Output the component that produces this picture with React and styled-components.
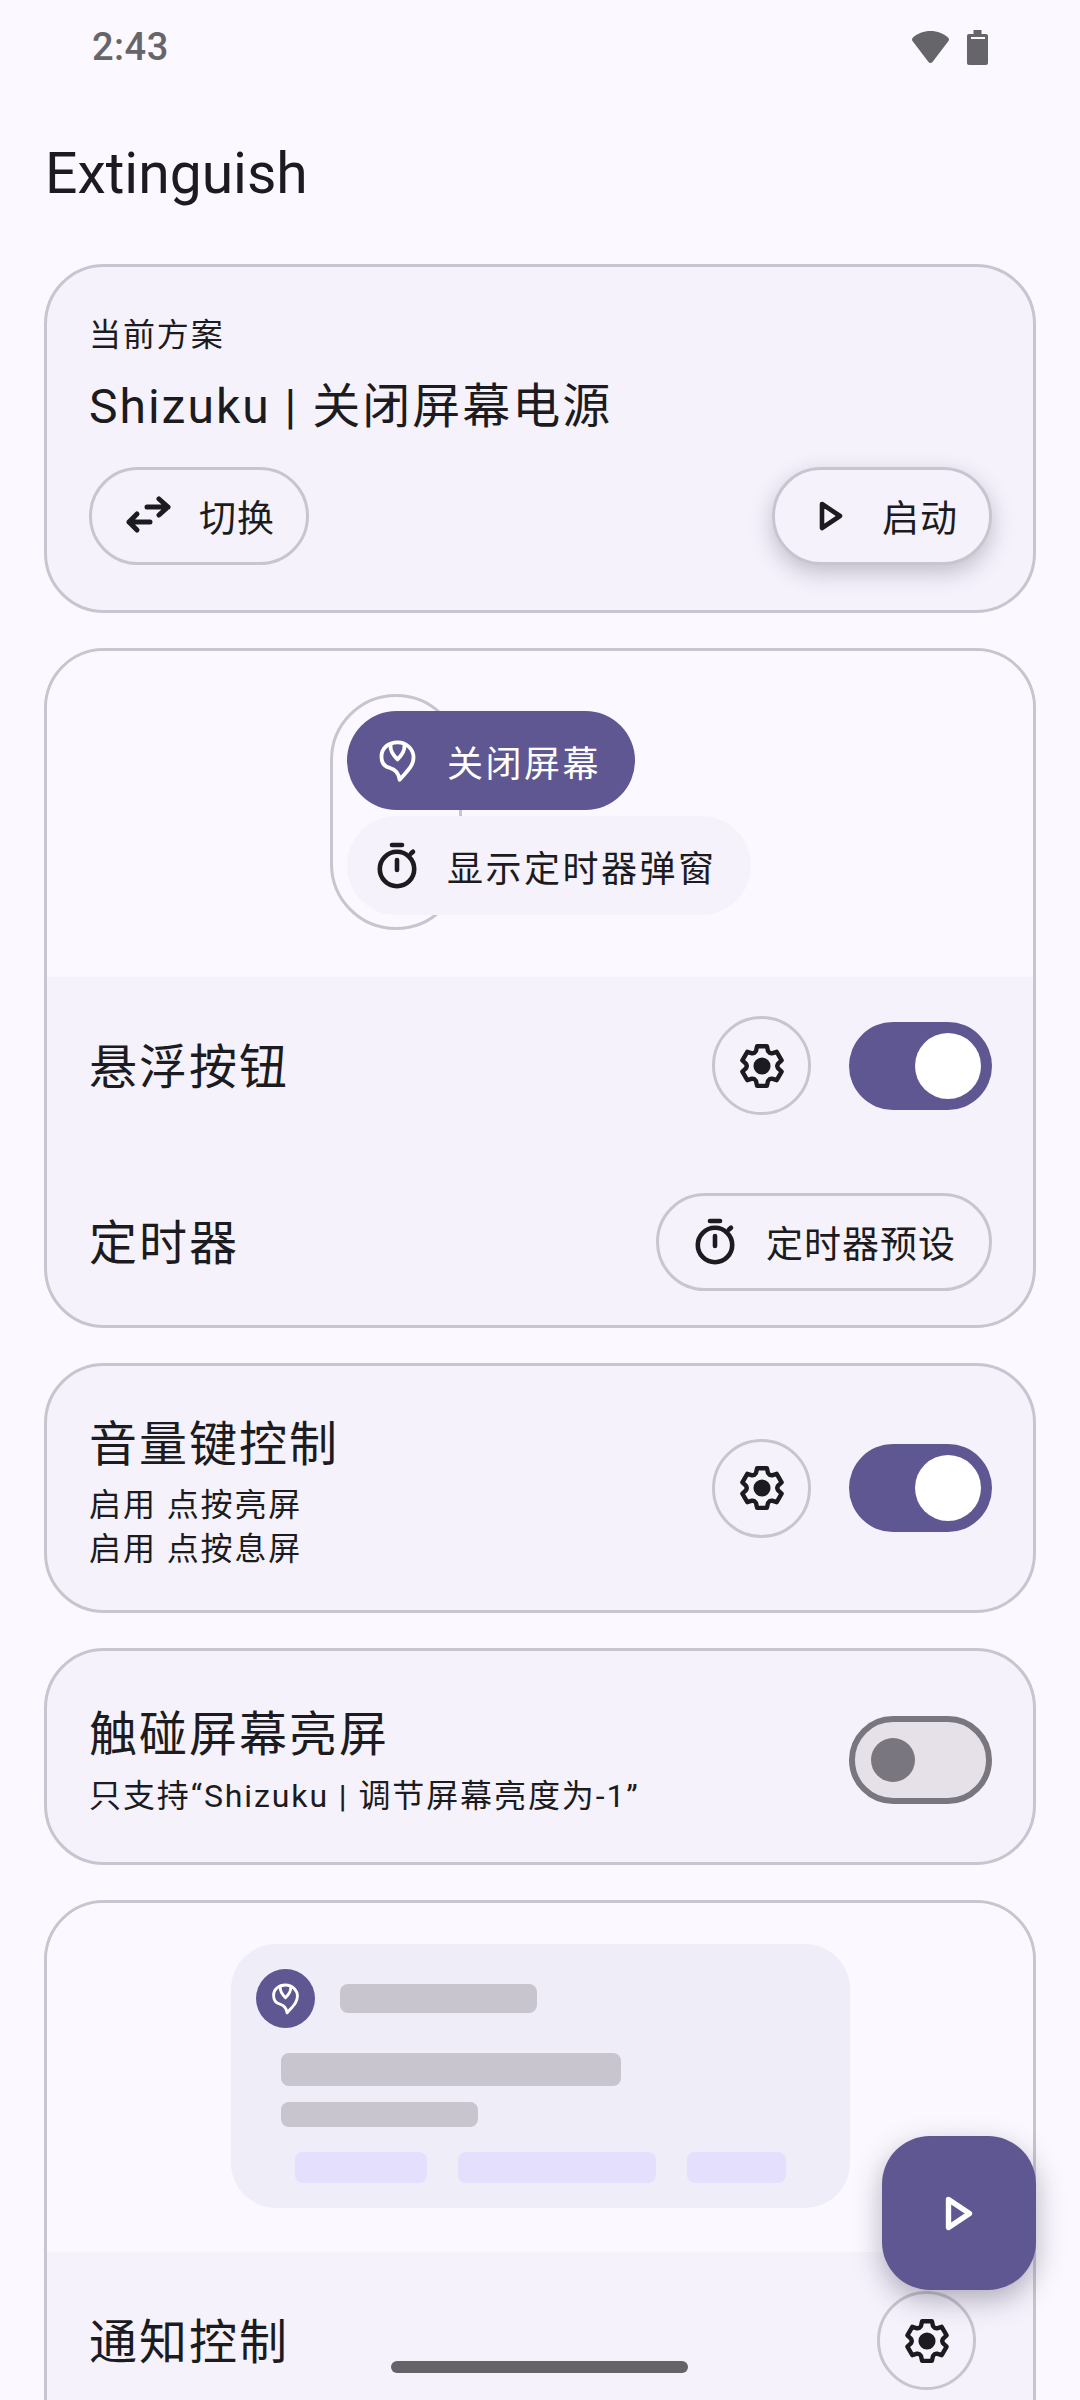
import styled, { createGlobalStyle } from "styled-components"

const GlobalStyle = createGlobalStyle`
  * { box-sizing: border-box; }
  html, body { margin: 0; padding: 0; background: #fbf8ff; }
  body { font-family: Roboto, "Noto Sans CJK SC", sans-serif; color: #1c1b20; }
`

const Screen = styled.div`
  position: relative;
  width: 1080px;
  height: 2400px;
  overflow: hidden;
  background: #fbf8ff;
  display: flex;
  flex-direction: column;
`
const StatusBar = styled.div`
  height: 94px;
  flex: none;
  padding: 0 92px;
  display: flex;
  align-items: center;
  justify-content: space-between;
  color: #666569;
`
const Clock = styled.span`
  font-size: 38px;
  font-weight: 500;
  letter-spacing: 0.5px;
`
const StatusIcons = styled.div`
  display: flex;
  align-items: center;
  gap: 18px;
`
const PageTitle = styled.h1`
  margin: 0;
  height: 170px;
  flex: none;
  padding: 47px 0 0 45px;
  font-size: 57px;
  line-height: 66px;
  font-weight: 400;
`
const Cards = styled.div`
  display: flex;
  flex-direction: column;
  gap: 35px;
  padding: 0 44px;
`
const Card = styled.section`
  flex: none;
  border: 3px solid #c9c5d0;
  border-radius: 60px;
  background: #f5f2fc;
  overflow: hidden;
`
const PlanBody = styled.div`
  padding: 46px 41px 45px 42px;
`
const Small = styled.div`
  font-size: 32px;
  line-height: 44px;
  letter-spacing: 1.9px;
`
const Big = styled.div`
  font-size: 48px;
  line-height: 66px;
  letter-spacing: 2px;
`
const RowTitle = styled(Big)`
  padding-top: 4px;
`
const PlanTitle = styled(Big)`
  margin: 17px 0 27px;
`
const Between = styled.div`
  display: flex;
  align-items: center;
  justify-content: space-between;
`
const IconBox = styled.span`
  width: ${p => p.$w || 54}px;
  flex: none;
  display: flex;
  align-items: center;
  justify-content: center;
`
const Pill = styled.button`
  height: 98px;
  padding: 0 ${p => p.$right || 31}px 0 29px;
  display: flex;
  align-items: center;
  gap: 24px;
  border: 3px solid #c9c5d0;
  border-radius: 49px;
  background: #f5f2fc;
  color: #1c1b20;
  font: inherit;
  font-size: 37px;
  letter-spacing: 1px;
  white-space: nowrap;
  box-shadow: ${p => p.$raised ? "0 8px 22px rgba(60, 55, 80, 0.28)" : "none"};
`
const Preview = styled.div`
  background: #fbf8ff;
  height: ${p => p.$height}px;
  display: flex;
  justify-content: center;
  align-items: flex-start;
  padding-top: ${p => p.$top}px;
`
const FloatWidget = styled.div`
  position: relative;
  width: 420px;
  height: 236px;
  padding: 17px 0 0 17px;
  display: flex;
  flex-direction: column;
  align-items: flex-start;
  gap: 6px;
`
const FloatRing = styled.div`
  position: absolute;
  left: 0;
  top: 0;
  width: 132px;
  height: 236px;
  border: 3px solid #c9c5d0;
  border-radius: 66px;
`
const FloatItem = styled.div`
  position: relative;
  height: 99px;
  padding: 0 34px 0 26px;
  display: flex;
  align-items: center;
  gap: 26px;
  border-radius: 50px;
  background: ${p => p.$active ? "#5f5791" : "#f5f2fc"};
  color: ${p => p.$active ? "#ffffff" : "#1c1b20"};
  font-size: 36px;
  letter-spacing: 2.5px;
  white-space: nowrap;
`
const Rows = styled.div`
  padding: ${p => p.$padding};
  display: flex;
  flex-direction: column;
  gap: 77px;
`
const SettingRow = styled(Between)`
  padding: 0 41px 0 42px;
  min-height: 99px;
`
const TextRow = styled(Between)`
  padding: ${p => p.$padding};
`
const Controls = styled.div`
  display: flex;
  align-items: center;
  gap: 38px;
  margin-right: ${p => p.$inset || 0}px;
  margin-top: ${p => p.$lift ? -p.$lift : 0}px;
`
const RoundButton = styled.button`
  width: 99px;
  height: 99px;
  padding: 0;
  display: flex;
  align-items: center;
  justify-content: center;
  border: 3px solid #c9c5d0;
  border-radius: 50%;
  background: transparent;
  color: #1c1b20;
`
const Switch = styled.div`
  width: 143px;
  height: 88px;
  flex: none;
  display: flex;
  align-items: center;
  justify-content: ${p => p.$on ? "flex-end" : "flex-start"};
  padding: ${p => p.$on ? "0 11px" : "0 16px"};
  border-radius: 44px;
  border: ${p => p.$on ? "none" : "6px solid #79767f"};
  background: ${p => p.$on ? "#5f5791" : "#e6e0e9"};
`
const Thumb = styled.div`
  width: ${p => p.$on ? 66 : 44}px;
  height: ${p => p.$on ? 66 : 44}px;
  border-radius: 50%;
  background: ${p => p.$on ? "#ffffff" : "#79767f"};
`
const Subtitle = styled(Small)`
  margin-top: ${p => p.$gap || 0}px;
`
const NotifyCard = styled.div`
  width: 619px;
  height: 264px;
  border-radius: 45px;
  background: #efedf7;
  padding: 25px 25px 0;
`
const NotifyHead = styled.div`
  display: flex;
  align-items: center;
  gap: 25px;
`
const AppBadge = styled.div`
  width: 59px;
  height: 59px;
  border-radius: 50%;
  background: #5f5791;
  color: #ffffff;
  display: flex;
  align-items: center;
  justify-content: center;
`
const Skeleton = styled.div`
  width: ${p => p.$w}px;
  height: ${p => p.$h}px;
  margin: ${p => p.$margin || 0};
  border-radius: 8px;
  background: ${p => p.$accent ? "#e4dffc" : "#c8c5cf"};
`
const NotifyActions = styled.div`
  display: flex;
  gap: 31px;
  margin: 25px 0 0 39px;
`
const Fab = styled.button`
  position: absolute;
  left: 882px;
  top: 2136px;
  width: 154px;
  height: 154px;
  padding: 0;
  border: none;
  border-radius: 48px;
  background: #5f5791;
  color: #ffffff;
  display: flex;
  align-items: center;
  justify-content: center;
  box-shadow: 0 10px 28px rgba(50, 45, 70, 0.35);
`
const HomeBar = styled.div`
  position: absolute;
  left: 391px;
  top: 2361px;
  width: 297px;
  height: 12px;
  border-radius: 6px;
  background: #646367;
`

const TimerIcon = ({ size = 48 }) => (
  <svg width={size} height={size} viewBox="0 0 48 48" fill="none" stroke="currentColor" strokeWidth="4.6" strokeLinecap="round">
    <path d="M19 3h10" />
    <circle cx="24" cy="27" r="17.2" />
    <path d="M24 18v10" />
    <path d="M38 11.5l2 -1.8" />
  </svg>
)

// six lobes, worked out once instead of typing 48 coordinates
const polar = (deg, r) => {
  const a = (deg * Math.PI) / 180
  return `${(24 + r * Math.cos(a)).toFixed(2)} ${(24 + r * Math.sin(a)).toFixed(2)}`
}
const gearPath = [0, 60, 120, 180, 240, 300].map(base => {
  const d = base - 90
  return `${polar(d - 14, 19.6)}L${polar(d + 14, 19.6)}L${polar(d + 22, 15.4)}L${polar(d + 30, 14.6)}L${polar(d + 38, 15.4)}`
}).join("L")

const GearIcon = () => (
  <svg width="50" height="50" viewBox="0 0 48 48" fill="none" stroke="currentColor" strokeWidth="4.2" strokeLinejoin="round">
    <path d={`M${gearPath}Z`} />
    <circle cx="24" cy="24" r="8.2" fill="currentColor" stroke="none" />
  </svg>
)

const SwapIcon = () => (
  <svg width="48" height="40" viewBox="0 0 48 40" fill="none" stroke="currentColor" strokeWidth="5" strokeLinecap="round" strokeLinejoin="round">
    <path d="M23 11h21M35 3l9 8-9 8" />
    <path d="M26 26H5M13 18l-8 8 8 8" />
  </svg>
)

const PlayIcon = ({ w = 24, h = 30 }) => (
  <svg width={w} height={h} viewBox="0 0 24 30" fill="none" stroke="currentColor" strokeWidth="4.6" strokeLinejoin="round">
    <path d="M3 3l18 12L3 27z" />
  </svg>
)

const LogoIcon = ({ size = 47 }) => (
  <svg width={size} height={size} viewBox="5 3 44 44" fill="none" stroke="currentColor" strokeWidth="3.6" strokeLinejoin="round" strokeLinecap="round">
    <path d="M27 8C36 8 42 15 42 22C42 30 36 35 29 43C28.500 39 27 34 20 32C15 31 12 27 12 21C12 14 18 8 27 8Z" />
    <path d="M20.500 11C20 16 24 21 27 24C30 21 34 16 33.500 11" />
  </svg>
)

const WifiIcon = () => (
  <svg width="37" height="32" viewBox="0 0 37 32" fill="currentColor">
    <path d="M18.500 0C11.500 0 5.500 2.500 1 6.500C-0.200 7.700 -0.300 9 0.700 10.300L16.300 30.700C17.500 32.300 19.500 32.300 20.700 30.700L36.300 10.300C37.300 9 37.200 7.700 36 6.500C31.500 2.500 25.500 0 18.500 0Z" />
  </svg>
)

const BatteryIcon = () => (
  <svg width="21" height="35" viewBox="0 0 21 35" fill="currentColor">
    <path d="M6.500 0H14.500V4H19C20.200 4 21 4.800 21 6V33C21 34.200 20.200 35 19 35H2C0.800 35 0 34.200 0 33V6C0 4.800 0.800 4 2 4H6.500Z" />
    <rect x="4" y="7" width="14" height="2" fill="#fbf8ff" />
  </svg>
)

export default function App() {
  return (
    <Screen>
      <GlobalStyle />
      <StatusBar>
        <Clock>2:43</Clock>
        <StatusIcons>
          <WifiIcon />
          <BatteryIcon />
        </StatusIcons>
      </StatusBar>
      <PageTitle>Extinguish</PageTitle>
      <Cards>
        <Card>
          <PlanBody>
            <Small>当前方案</Small>
            <PlanTitle>Shizuku | 关闭屏幕电源</PlanTitle>
            <Between>
              <Pill><IconBox><SwapIcon /></IconBox>切换</Pill>
              <Pill $raised><IconBox><PlayIcon /></IconBox>启动</Pill>
            </Between>
          </PlanBody>
        </Card>

        <Card>
          <Preview $height={326} $top={43}>
            <FloatWidget>
              <FloatRing />
              <FloatItem $active><IconBox $w={48}><LogoIcon /></IconBox>关闭屏幕</FloatItem>
              <FloatItem><IconBox $w={48}><TimerIcon /></IconBox>显示定时器弹窗</FloatItem>
            </FloatWidget>
          </Preview>
          <Rows $padding="39px 0 34px">
            <SettingRow>
              <RowTitle>悬浮按钮</RowTitle>
              <Controls>
                <RoundButton><GearIcon /></RoundButton>
                <Switch $on><Thumb $on /></Switch>
              </Controls>
            </SettingRow>
            <SettingRow>
              <RowTitle>定时器</RowTitle>
              <Pill $right={33}><IconBox><TimerIcon /></IconBox>定时器预设</Pill>
            </SettingRow>
          </Rows>
        </Card>

        <Card>
          <TextRow $padding="46px 41px 39px 42px">
            <div>
              <Big>音量键控制</Big>
              <Subtitle $gap={5}>启用 点按亮屏</Subtitle>
              <Small>启用 点按息屏</Small>
            </div>
            <Controls $lift={7}>
              <RoundButton><GearIcon /></RoundButton>
              <Switch $on><Thumb $on /></Switch>
            </Controls>
          </TextRow>
        </Card>

        <Card>
          <TextRow $padding="51px 41px 44px 42px">
            <div>
              <Big>触碰屏幕亮屏</Big>
              <Subtitle $gap={6}>只支持“Shizuku | 调节屏幕亮度为-1”</Subtitle>
            </div>
            <Switch><Thumb /></Switch>
          </TextRow>
        </Card>

        <Card>
          <Preview $height={349} $top={41}>
            <NotifyCard>
              <NotifyHead>
                <AppBadge><LogoIcon size={35} /></AppBadge>
                <Skeleton $w={197} $h={29} />
              </NotifyHead>
              <Skeleton $w={340} $h={33} $margin="25px 0 0 25px" />
              <Skeleton $w={197} $h={25} $margin="16px 0 0 25px" />
              <NotifyActions>
                <Skeleton $accent $w={132} $h={31} />
                <Skeleton $accent $w={198} $h={31} />
                <Skeleton $accent $w={99} $h={31} />
              </NotifyActions>
            </NotifyCard>
          </Preview>
          <Rows $padding="39px 0 200px">
            <SettingRow>
              <RowTitle>通知控制</RowTitle>
              <Controls $inset={16}>
                <RoundButton><GearIcon /></RoundButton>
              </Controls>
            </SettingRow>
          </Rows>
        </Card>
      </Cards>
      <Fab><PlayIcon w={28} h={35} /></Fab>
      <HomeBar />
    </Screen>
  )
}
